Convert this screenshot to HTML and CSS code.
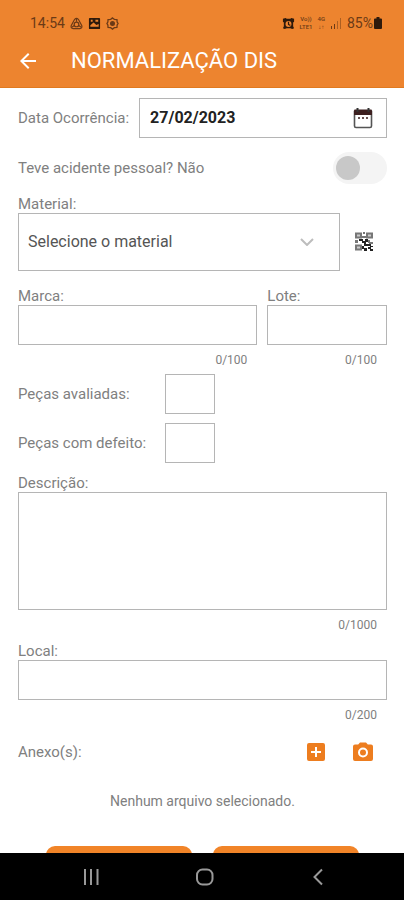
FILE: index.html
```html
<!DOCTYPE html>
<html lang="pt-BR">
<head>
<meta charset="utf-8">
<meta name="viewport" content="width=device-width, initial-scale=1">
<title>Normalização DIS</title>
<link rel="stylesheet" href="styles.css">
</head>
<body>
<div class="app">
  <header class="header">
    <div class="status">
      <div class="status-group">
        <span class="clock">14:54</span>
        <svg class="status-icon" viewBox="0 0 14 14" fill="none" stroke="currentColor" stroke-width="1.3"><path d="M5 2.5Q7 .5 9 2.5L12.6 9Q13.5 12.300 10.500 12.500H3.500Q.5 12.300 1.400 9Z"/><circle cx="7" cy="8" r="2.500"/><path d="M7 2v3M2 11l3-2M12 11l-3-2"/></svg>
        <svg class="status-icon dark" viewBox="0 0 14 14"><path fill="currentColor" fill-rule="evenodd" d="M2 1h10q1 0 1 1v10q0 1-1 1H2q-1 0-1-1V2q0-1 1-1ZM2.500 10.500h9v-3L9 8.500 6 6 2.500 9ZM3 3v2h2V3ZM8 3v2h3V3Z"/></svg>
        <svg class="status-icon" viewBox="0 0 14 14" fill="none" stroke="currentColor" stroke-width="1.400"><path d="M7 1l2 1.500 2.800.3.2 2.700L13 7l-1 1.500-.2 2.700-2.800.3L7 13l-2-1.500-2.800-.3L2 8.500 1 7l1-1.500.2-2.700L5 2.500Z"/><circle cx="7" cy="7" r="2" fill="currentColor"/></svg>
      </div>
      <div class="status-group status-right">
        <svg class="status-icon dark" viewBox="0 0 14 14"><path d="M1 2l3-1 1 1h4l1-1 3 1v3l-1 1v4l1 2-2 1-2-1H5l-2 1-2-1 1-2V6L1 5Z" fill="currentColor"/><circle cx="7" cy="7.500" r="3.200" fill="#ed842f"/><path d="M7 5v3l2 1" fill="none" stroke="currentColor" stroke-width="1.300"/></svg>
        <span class="network"><span>Vo))</span><span>LTE1</span></span>
        <span class="network"><span>4G</span><span class="arrows">↓↑</span></span>
        <svg class="signal" viewBox="0 0 12 12"><path d="M1 9h1v3H1zM4 7h1v5H4z" fill="currentColor"/><path d="M7 4h1v8H7zM10 1h1v11h-1z" fill="currentColor" opacity=".5"/></svg>
        <span class="clock">85%</span>
        <svg class="battery" viewBox="0 0 8 12"><path d="M2.500 0h3v1.500H7q1 0 1 1V11q0 1-1 1H1q-1 0-1-1V2.500q0-1 1-1h1.500z" fill="currentColor"/></svg>
      </div>
    </div>
    <div class="titlebar">
      <button class="icon-button back" type="button" aria-label="Voltar">
        <svg viewBox="0 0 24 24" width="24" height="24"><path d="M20 11H7.830l5.590-5.590L12 4l-8 8 8 8 1.410-1.410L7.830 13H20z" fill="#fff"/></svg>
      </button>
      <h1 class="title">NORMALIZAÇÃO DIS</h1>
    </div>
  </header>

  <main class="content">
    <form class="form">
      <div class="row date-row">
        <label for="data">Data Ocorrência:</label>
        <div class="date-field">
          <input id="data" type="text" value="27/02/2023">
          <button class="icon-button" type="button" aria-label="Abrir calendário">
            <svg viewBox="0 0 20 22" width="20" height="22"><path d="M1.500 4.500h17V19q0 1.500-1.500 1.500H3Q1.500 20.500 1.500 19Z" fill="#fff" stroke="#555" stroke-width="1.600"/><path d="M1 3.500Q1 2.500 2 2.500h16q1 0 1 1V8H1Z" fill="#3d2020"/><path d="M4.500 1v4M15.500 1v4" stroke="#333" stroke-width="2"/><path d="M5 11h2M9 11h2M13 11h2" stroke="#6b5555" stroke-width="2"/></svg>
          </button>
        </div>
      </div>

      <div class="row switch-row">
        <label for="acidente">Teve acidente pessoal? Não</label>
        <input id="acidente" class="switch" type="checkbox" role="switch">
      </div>

      <div class="field material">
        <label for="material">Material:</label>
        <div class="row">
          <div class="select-wrap">
            <select id="material"><option>Selecione o material</option></select>
            <svg class="chevron" viewBox="0 0 14 8" width="14" height="8"><path d="M1 1l6 6 6-6" fill="none" stroke="#bdbdbd" stroke-width="2"/></svg>
          </div>
          <button class="icon-button qr" type="button" aria-label="Ler código QR">
            <svg viewBox="0 0 20 20" width="20" height="20"><g fill="#ccc" stroke="#777" stroke-width="2"><rect x="2" y="1.500" width="5" height="4"/><rect x="13" y="1.500" width="5" height="4"/><rect x="2" y="13.500" width="5" height="4"/></g><path d="M9 0h2v2H9zM8 4h4v2H8zM1 8h3v2H1zM14 8h2v2h3v2h-4v-1h-1zM1 10h3v1H1z" fill="#777"/><path d="M5 7h4v2h2V7h3v3h-2v2h2v2h-4v-3H8V9H5zM8 14h2v2h3v3h-3v-2H8zM14 12h3v2h-3zM16 14h3v1h-2v2h2v2h-3v-2h-2v-2h2z" fill="#222"/></svg>
          </button>
        </div>
      </div>

      <div class="pair">
        <div class="field">
          <label for="marca">Marca:</label>
          <input id="marca" class="box" type="text" maxlength="100">
          <span class="counter">0/100</span>
        </div>
        <div class="field">
          <label for="lote">Lote:</label>
          <input id="lote" class="box" type="text" maxlength="100">
          <span class="counter">0/100</span>
        </div>
      </div>

      <div class="pieces">
        <label for="avaliadas">Peças avaliadas:</label>
        <input id="avaliadas" class="box" type="text" inputmode="numeric">
        <label for="defeito">Peças com defeito:</label>
        <input id="defeito" class="box" type="text" inputmode="numeric">
      </div>

      <div class="field">
        <label for="descricao">Descrição:</label>
        <textarea id="descricao" class="box" maxlength="1000"></textarea>
        <span class="counter">0/1000</span>
      </div>

      <div class="field local">
        <label for="local">Local:</label>
        <input id="local" class="box" type="text" maxlength="200">
        <span class="counter">0/200</span>
      </div>

      <div class="row attachments">
        <span>Anexo(s):</span>
        <div class="attachment-actions">
          <button class="icon-button" type="button" aria-label="Adicionar arquivo">
            <svg viewBox="0 0 24 24" width="24" height="24"><path d="M19 3H5a2 2 0 0 0-2 2v14a2 2 0 0 0 2 2h14a2 2 0 0 0 2-2V5a2 2 0 0 0-2-2zm-2 10h-4v4h-2v-4H7v-2h4V7h2v4h4z" fill="#ed7d1f"/></svg>
          </button>
          <button class="icon-button" type="button" aria-label="Tirar foto">
            <svg viewBox="0 0 24 24" width="24" height="24"><path fill-rule="evenodd" d="M9 2.500 7.200 4.500H4a2 2 0 0 0-2 2V19a2 2 0 0 0 2 2h16a2 2 0 0 0 2-2V6.500a2 2 0 0 0-2-2h-3.200L15 2.500zM12 7.500a5 5 0 1 1 0 10 5 5 0 0 1 0-10zm0 2a3 3 0 1 0 0 6 3 3 0 0 0 0-6z" fill="#ed7d1f"/></svg>
          </button>
        </div>
      </div>
      <p class="empty">Nenhum arquivo selecionado.</p>

      <div class="actions">
        <button class="action" type="button" aria-label="Cancelar"></button>
        <button class="action" type="submit" aria-label="Salvar"></button>
      </div>
    </form>
  </main>

  <nav class="navbar">
    <button class="icon-button" type="button" aria-label="Recentes">
      <svg viewBox="0 0 20 20" width="20" height="20"><path d="M3 2v16M9 2v16M15.500 2v16" stroke="#999" stroke-width="2"/></svg>
    </button>
    <button class="icon-button" type="button" aria-label="Início">
      <svg viewBox="0 0 20 20" width="20" height="20"><rect x="2" y="2.500" width="15.500" height="15" rx="5.500" fill="none" stroke="#999" stroke-width="2"/></svg>
    </button>
    <button class="icon-button" type="button" aria-label="Voltar">
      <svg viewBox="0 0 20 20" width="20" height="20"><path d="M14 2.500 6.500 10l7.500 7.500" fill="none" stroke="#999" stroke-width="2"/></svg>
    </button>
  </nav>
</div>
</body>
</html>
```
FILE: styles.css
```css
* {
  box-sizing: border-box;
}

body {
  margin: 0;
  background: #fff;
  color: #808080;
  font-family: Roboto, "Liberation Sans", sans-serif;
  font-size: 15px;
  line-height: 18px;
}

input,
select,
textarea,
button {
  margin: 0;
  font: inherit;
}

svg {
  display: block;
  flex: none;
}

.app {
  display: flex;
  flex-direction: column;
  height: 100vh;
}

.header {
  flex: none;
  padding-top: 14px;
  background: #ed842f;
  border-bottom: 1px solid #e07a20;
}

.status {
  display: flex;
  justify-content: space-between;
  height: 18px;
  padding: 0 22px 0 30px;
  color: #6b3a16;
}

.status-group {
  display: flex;
  align-items: center;
  gap: 5px;
}

.clock {
  font-size: 14px;
}

.status-icon {
  width: 13px;
  height: 13px;
}

.dark,
.battery {
  color: #2e1a0c;
}

.network {
  display: flex;
  flex-direction: column;
  align-items: center;
  font-size: 6px;
  font-weight: 500;
  line-height: 8px;
}

.signal {
  width: 12px;
  height: 12px;
}

.battery {
  width: 8px;
  height: 12px;
  margin-left: -4px;
}

.titlebar {
  display: flex;
  align-items: center;
  height: 55px;
  padding: 3px 0 0 16px;
}

.title {
  margin: 0 0 0 31px;
  color: #fff;
  font-size: 22px;
  font-weight: 400;
}

.icon-button {
  display: flex;
  align-items: center;
  justify-content: center;
  padding: 0;
  border: 0;
  background: none;
}

.content {
  flex: 1;
  min-height: 0;
  overflow: hidden;
}

.form {
  padding: 10px 17px 0 18px;
}

.row {
  display: flex;
  align-items: center;
}

.date-row {
  gap: 10px;
}

.date-row label {
  white-space: nowrap;
}

.date-field {
  display: flex;
  flex: 1;
  align-items: center;
  min-width: 0;
  height: 40px;
  padding: 0 13px 0 10px;
  border: 1px solid #b5b5b5;
}

.date-field input {
  flex: 1;
  min-width: 0;
  padding: 0;
  border: 0;
  color: #222;
  font-size: 16px;
  font-weight: 700;
}

.switch-row {
  justify-content: space-between;
  margin: 14px 0 11px;
}

.switch {
  display: flex;
  align-items: center;
  width: 54px;
  height: 32px;
  padding: 0 3px;
  border-radius: 16px;
  background: #f4f4f4;
  appearance: none;
}

.switch::before {
  width: 24px;
  height: 24px;
  border-radius: 50%;
  background: #c8c8c8;
  content: "";
}

.field {
  display: flex;
  flex-direction: column;
}

.select-wrap {
  position: relative;
  flex: 1;
}

select {
  display: block;
  width: 100%;
  height: 58px;
  padding: 0 40px 0 9px;
  border: 1px solid #b5b5b5;
  border-radius: 0;
  background: #fff;
  color: #555;
  font-size: 16px;
  appearance: none;
}

.chevron {
  position: absolute;
  top: 25px;
  right: 26px;
  pointer-events: none;
}

.qr {
  width: 47px;
}

.pair {
  display: grid;
  grid-template-columns: 2fr 1fr;
  gap: 10px;
  margin: 16px 0 7px;
}

.box {
  width: 100%;
  height: 40px;
  padding: 0 10px;
  border: 1px solid #b5b5b5;
  border-radius: 0;
  background: #fff;
  color: #555;
}

textarea.box {
  height: 118px;
  padding: 10px;
  resize: none;
}

.counter {
  margin: 8px 10px 0 0;
  font-size: 12px;
  line-height: 14px;
  text-align: right;
}

.pieces {
  display: grid;
  grid-template-columns: 147px 50px;
  align-items: center;
  gap: 9px 0;
  margin-bottom: 11px;
}

.local {
  margin-top: 10px;
}

.attachments {
  justify-content: space-between;
  margin-top: 18px;
}

.attachment-actions {
  display: flex;
  gap: 23px;
  padding-right: 12px;
}

.empty {
  margin: 28px 0 36px;
  font-size: 14px;
  text-align: center;
}

.actions {
  display: grid;
  grid-template-columns: 1fr 1fr;
  gap: 21px;
  padding: 0 28px;
}

.action {
  height: 40px;
  border: 0;
  border-radius: 9px;
  background: #f18428;
}

.navbar {
  display: flex;
  flex: none;
  align-items: center;
  justify-content: space-between;
  height: 47px;
  padding: 0 76px 0 82px;
  background: #000;
}
```
